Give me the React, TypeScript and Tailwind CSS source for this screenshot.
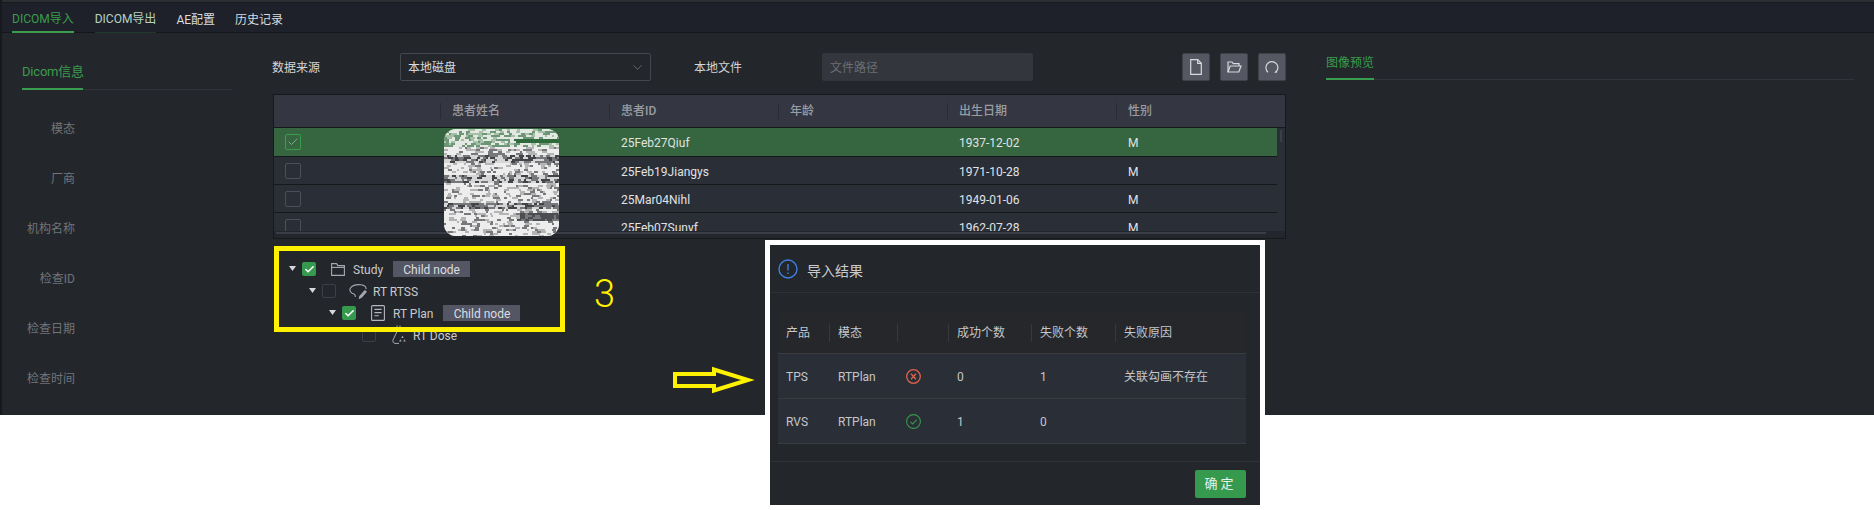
import { Check, ChevronDown } from "lucide-react";

const patients = [
  { id: "25Feb27Qiuf", birth: "1937-12-02", sex: "M", checked: true },
  { id: "25Feb19Jiangys", birth: "1971-10-28", sex: "M", checked: false },
  { id: "25Mar04Nihl", birth: "1949-01-06", sex: "M", checked: false },
  { id: "25Feb07Sunyf", birth: "1962-07-28", sex: "M", checked: false },
];

const sideLabels = ["模态", "厂商", "机构名称", "检查ID", "检查日期", "检查时间"];
const tableHeads = ["患者姓名", "患者ID", "年龄", "出生日期", "性别"];

// mosaic that covers the name column
function Mosaic() {
  let seed = 41;
  const rand = () => {
    seed = (seed * 16807) % 2147483647;
    return seed / 2147483647;
  };
  const cells: { x: number; y: number; w: number; fill: string }[] = [];
  for (let y = 0; y < 107; y += 2) {
    const darkBand = (y >= 26 && y < 34) || (y >= 46 && y < 54) || (y >= 74 && y < 80);
    for (let x = 0; x < 115; ) {
      const r = rand();
      const w = 2 + Math.floor(rand() * 4);
      let fill = r > 0.4 ? "#ededed" : r > 0.18 ? "#b4b4b5" : "#77787b";
      if (y < 18) fill = r > 0.5 ? "#e3e8e3" : r > 0.2 ? "#6d9676" : "#a6bfa9";
      if (darkBand) fill = r > 0.62 ? "#d6d6d6" : r > 0.3 ? "#77787b" : "#434448";
      if (y >= 84 && y < 92 && x > 72) fill = r > 0.3 ? "#4c4d51" : "#77787b";
      if (y >= 10 && y < 13 && x > 68) fill = "#2f6a3c";
      cells.push({ x, y, w, fill });
      x += w;
    }
  }
  return (
    <svg
      viewBox="0 0 115 107"
      className="absolute left-[444px] top-[129px] h-[107px] w-[115px] rounded-[12px]"
    >
      <rect width="115" height="107" fill="#cfcfcf" />
      {cells.map((c, i) => (
        <rect key={i} x={c.x} y={c.y} width={c.w} height="2" fill={c.fill} />
      ))}
    </svg>
  );
}

function CheckBox({ checked, tree }: { checked?: boolean; tree?: boolean }) {
  if (tree) {
    return checked ? (
      <span className="flex h-[14px] w-[14px] items-center justify-center rounded-[2px] bg-[#359a4e]">
        <Check size={11} strokeWidth={3.5} color="#fff" />
      </span>
    ) : (
      <span className="h-[14px] w-[14px] rounded-[2px] border border-[#3c3f45]" />
    );
  }
  return checked ? (
    <span className="flex h-[16px] w-[16px] items-center justify-center rounded-[2px] border border-[#3a9d4d]">
      <Check size={12} strokeWidth={1.5} color="#8fc79c" />
    </span>
  ) : (
    <span className="h-[16px] w-[16px] rounded-[2px] border border-[#4a4f5a]" />
  );
}

function FileIcon() {
  return (
    <svg width="12" height="16" viewBox="0 0 12 16" fill="none" stroke="#d8dade" strokeWidth="1.2">
      <path d="M.7.7h7l3.6 3.6v11H.7z" />
      <path d="M7.7.7v3.6h3.6" />
    </svg>
  );
}

function OpenFolderIcon() {
  return (
    <svg width="15" height="12" viewBox="0 0 15 12" fill="none" stroke="#d8dade" strokeWidth="1.2">
      <path d="M1 11V1h4l1.2 1.6H12V5" />
      <path d="M1 11l2.2-6H14l-2.2 6z" />
    </svg>
  );
}

function RefreshIcon() {
  return (
    <svg width="14" height="14" viewBox="0 0 14 14" fill="none" stroke="#d8dade" strokeWidth="1.2">
      <path d="M3 12.2A6 6 0 1 1 11 12" />
      <path d="M11.9 9.8V12.8H9.2" fill="#d8dade" stroke="none" />
    </svg>
  );
}

function FolderIcon() {
  return (
    <svg width="14" height="13" viewBox="0 0 14 13" fill="none" stroke="#a6a9b0" strokeWidth="1.1">
      <path d="M.6.6h5l1.2 2h6.6v9.8H.6z" />
      <path d="M.6 4.4h12.8" />
    </svg>
  );
}

function RtssIcon() {
  return (
    <svg width="18" height="15" viewBox="0 0 18 15" fill="none" stroke="#a6a9b0" strokeWidth="1.1">
      <path d="M5 10C1.5 9.2.4 6.6 1.2 4.4 2.6 1 8 .2 12 .8c3 .5 5.4 2 5 4.4" />
      <path d="M5 10c1.2.6 1.6 1.6 1.3 3" />
      <path d="M15.8 6.8l1.4 1.1-4.8 5.5-2 .9.5-2.1z" fill="#a6a9b0" />
    </svg>
  );
}

function PlanIcon() {
  return (
    <svg width="14" height="16" viewBox="0 0 14 16" fill="none" stroke="#b4b7bd" strokeWidth="1.1">
      <rect x=".6" y=".6" width="12.8" height="14.8" rx="1" />
      <path d="M3.4 4.4h7.2M3.4 7.6h7.2M3.4 10.8h4.4" />
    </svg>
  );
}

function DoseIcon() {
  return (
    <svg width="15" height="20" viewBox="0 0 15 20" fill="none" stroke="#a6a9b0" strokeWidth="1">
      <path d="M5 .5v6L1 15c-.6 1.6.2 3 2 3.4h4" />
      <path d="M8 .5v5" />
      <path d="M10.5 10.5l1.2 2.4h-2.4zM7 16.5l1.4-2.2 1.2 2.2zM13.8 16.5l-1.4-2.2-1.2 2.2z" fill="#a6a9b0" stroke="none" />
    </svg>
  );
}

const treeNodes = [
  { label: "Study", checked: true, badge: true, rowCls: "pl-[17px]", iconCls: "ml-[15px] mr-[8px]", icon: <FolderIcon /> },
  { label: "RT RTSS", checked: false, badge: false, rowCls: "pl-[37px]", iconCls: "ml-[13px] mr-[6px]", icon: <RtssIcon /> },
  { label: "RT Plan", checked: true, badge: true, rowCls: "pl-[57px]", iconCls: "ml-[15px] mr-[8px]", icon: <PlanIcon /> },
  { label: "RT Dose", checked: false, badge: false, rowCls: "pl-[90px]", iconCls: "ml-[16px] mr-[6px]", icon: <DoseIcon />, leaf: true },
];

const resultRows = [
  { product: "TPS", modality: "RTPlan", ok: false, success: "0", fail: "1", reason: "关联勾画不存在" },
  { product: "RVS", modality: "RTPlan", ok: true, success: "1", fail: "0", reason: "" },
];

const resultHeads = ["产品", "模态", "", "成功个数", "失败个数", "失败原因"];

function ResultModal() {
  return (
    <div className="absolute left-[765px] top-[240px] flex h-[270px] w-[500px] flex-col border-[5px] border-white bg-[#23262b] text-[12px] text-[#c4c6c9]">
      <div className="flex h-[48px] items-center border-b border-[#2e3136] pl-[8px]">
        <svg width="20" height="20" viewBox="0 0 20 20" fill="none" stroke="#3f7fe0" strokeWidth="1.4">
          <circle cx="10" cy="10" r="9" />
          <path d="M10 5v6.5M10 13.6v1.4" />
        </svg>
        <span className="ml-[9px] mt-[6px] text-[14px] text-[#c9cbce]">导入结果</span>
      </div>
      <div className="pl-[8px] pr-[14px] pt-[18px]">
        <div className="grid h-[43px] grid-cols-[51px_68px_51px_83px_84px_1fr] items-center border-b border-[#383b40] bg-[#25272a] pt-[1px]">
          {resultHeads.map((h, i) => (
            <div key={i} className={i === 0 ? "pl-[8px]" : "flex h-[18px] items-center border-l border-[#35383d] pl-[8px]"}>
              {h}
            </div>
          ))}
        </div>
        {resultRows.map((r) => (
          <div key={r.product} className="grid h-[45px] grid-cols-[51px_68px_51px_83px_84px_1fr] items-center border-b border-[#383b40] bg-[#2a2e37] pt-[1px]">
            <div className="pl-[8px]">{r.product}</div>
            <div className="pl-[9px]">{r.modality}</div>
            <div className="pl-[9px]">
              {r.ok ? (
                <svg width="15" height="15" viewBox="0 0 15 15" fill="none" stroke="#359a4e" strokeWidth="1.1">
                  <circle cx="7.5" cy="7.5" r="6.9" />
                  <path d="M4.5 7.8l2.2 2.2 4-4.4" />
                </svg>
              ) : (
                <svg width="15" height="15" viewBox="0 0 15 15" fill="none" stroke="#e0644c" strokeWidth="1.3">
                  <circle cx="7.5" cy="7.5" r="6.8" />
                  <path d="M5 4.8l5 5.4M10 4.8l-5 5.4" />
                </svg>
              )}
            </div>
            <div className="pl-[9px]">{r.success}</div>
            <div className="pl-[9px]">{r.fail}</div>
            <div className="pl-[9px]">{r.reason}</div>
          </div>
        ))}
      </div>
      <div className="mt-[17px] flex justify-end border-t border-[#2e3136] pr-[14px] pt-[8px]">
        <button className="h-[28px] w-[51px] rounded-[2px] bg-[#359a4e] text-[13px] tracking-[3px] text-[#e8f2ea]">确定</button>
      </div>
    </div>
  );
}

export default function App() {
  return (
    <div className="relative h-[510px] w-[1874px] overflow-hidden bg-white font-['Roboto','Noto_Sans_CJK_SC',sans-serif] text-[12px]">
      <div className="flex h-[415px] flex-col border-l-2 border-[#17191d] bg-[#23262b]">
        <div className="h-[3px] border-b border-[#191b1f] bg-[#2b2e33]" />

        {/* Top tabs */}
        <div className="flex h-[30px] gap-[20px] border-b border-[#14161a] bg-[#1e2129] pl-[10px]">
          <div className="flex h-[30px] items-center border-b-2 border-[#3a9d4d] pt-[3px] text-[#3a9d4d]">DICOM导入</div>
          <div className="ml-px flex h-[30px] items-center border-b border-[#1f3a2a] pt-[3px] text-[#b4d3c4]">DICOM导出</div>
          <div className="flex h-[30px] items-center pt-[3px] text-[#dadcdf]">AE配置</div>
          <div className="flex h-[30px] items-center pt-[3px] text-[#dadcdf]">历史记录</div>
        </div>

        <div className="flex flex-1">
          {/* Left info */}
          <div className="w-[270px] shrink-0 pl-[20px]">
            <div className="mt-[29px] flex w-[210px] border-b border-[#30343a]">
              <div className="-mb-px w-[61px] whitespace-nowrap border-b-2 border-[#3a9d4d] pb-[6px] text-[13px] leading-[20px] tracking-[-0.2px] text-[#3a9d4d]">Dicom信息</div>
            </div>
            <div className="mt-[14px] w-[53px]">
              {sideLabels.map((l) => (
                <div key={l} className="flex h-[50px] items-center justify-end whitespace-nowrap text-[#70747a]">
                  {l}
                </div>
              ))}
            </div>
          </div>

          {/* Center */}
          <div className="w-[1014px] shrink-0">
            <div className="mt-[20px] flex items-center text-[#d3d5d8]">
              <span className="w-[128px] pt-[2px]">数据来源</span>
              <div className="flex h-[28px] w-[251px] items-center justify-between rounded-[2px] border border-[#44474d] pl-[7px] pr-[5px]">
                <span className="pt-[2px] text-[#d8dadc]">本地磁盘</span>
                <ChevronDown size={15} strokeWidth={1} color="#8a8d93" />
              </div>
              <span className="ml-[43px] w-[128px] pt-[2px]">本地文件</span>
              <div className="flex h-[28px] w-[211px] items-center rounded-[2px] bg-[#33363c] pl-[8px] pt-[2px] text-[#6b6e73]">文件路径</div>
              <div className="ml-auto flex gap-[10px]">
                <button className="flex h-[28px] w-[28px] items-center justify-center rounded-[2px] border border-[#3f4248] bg-[#555762]"><FileIcon /></button>
                <button className="flex h-[28px] w-[28px] items-center justify-center rounded-[2px] border border-[#3f4248] bg-[#555762]"><OpenFolderIcon /></button>
                <button className="flex h-[28px] w-[28px] items-center justify-center rounded-[2px] border border-[#3f4248] bg-[#555762]"><RefreshIcon /></button>
              </div>
            </div>

            {/* Patient table */}
            <div className="ml-px mt-[13px] h-[145px] border border-[#16181c] bg-[#23262d]">
              <div className="grid h-[33px] grid-cols-[166px_repeat(5,169px)_1fr] items-center border-b border-[#16181c] bg-[#343741] font-medium text-[#9a9da3]">
                <div />
                {tableHeads.map((h) => (
                  <div key={h} className="flex h-[16px] items-center border-l border-[#282b33] pl-[11px]">{h}</div>
                ))}
                <div />
              </div>
              <div className="flex h-[103px] overflow-hidden">
                <div className="w-[1003px]">
                  {patients.map((p) => (
                    <div
                      key={p.id}
                      className={`grid grid-cols-[166px_169px_169px_169px_169px_1fr] items-center border-b border-[#16181c] text-[#e0e2e4] ${
                        p.checked ? "h-[29px] bg-[#35663f]" : "h-[28px] bg-[#2a2e37]"
                      }`}
                    >
                      <div className="flex pl-[11px]"><CheckBox checked={p.checked} /></div>
                      <div />
                      <div className="pl-[12px] pt-[2px]">{p.id}</div>
                      <div />
                      <div className="pl-[12px] pt-[2px]">{p.birth}</div>
                      <div className="pl-[12px] pt-[2px]">{p.sex}</div>
                    </div>
                  ))}
                </div>
                <div className="flex-1 bg-[#2a2e37] pl-[3px] pt-[2px]">
                  <div className="h-[12px] w-[2px] bg-[#3b3f49]" />
                </div>
              </div>
              <div className="mx-[2px] mt-px h-[2px] w-[990px] bg-[#3a3d46]" />
            </div>

            {/* Tree */}
            <div className="mt-[19px] text-[#c8cacd]">
              {treeNodes.map((n) => (
                <div key={n.label} className={`flex h-[22px] items-center ${n.rowCls}`}>
                  {!n.leaf && (
                    <svg width="13" height="6" viewBox="0 0 13 6" className="shrink-0">
                      <path d="M0 0h7L3.5 5z" fill="#d5d7da" />
                    </svg>
                  )}
                  <CheckBox tree checked={n.checked} />
                  <span className={`flex items-center ${n.iconCls}`}>{n.icon}</span>
                  <span className="pt-[1px]">{n.label}</span>
                  {n.badge && (
                    <span className="ml-[10px] flex h-[16px] w-[77px] items-center justify-center bg-[#545664] pt-[1px] text-[#dcdde0]">Child node</span>
                  )}
                </div>
              ))}
            </div>
          </div>

          {/* Right preview */}
          <div className="ml-[40px] mt-[20px] h-fit w-[528px] border-b border-[#30343a]">
            <div className="-mb-px w-fit border-b-2 border-[#3a9d4d] pb-[5px] leading-[20px] text-[#3a9d4d]">图像预览</div>
          </div>
        </div>
      </div>

      <Mosaic />

      {/* Annotations on top of the screenshot */}
      <div className="absolute left-[274px] top-[246px] h-[86px] w-[291px] border-[5px] border-[#fff200]" />
      <div className="absolute left-[594px] top-[272px] text-[38px] font-light leading-[44px] text-[#fff200]">3</div>
      <svg width="85" height="30" viewBox="671 365 85 30" className="absolute left-[671px] top-[365px]" fill="none" stroke="#fff200" strokeWidth="4">
        <path d="M675 374H714V369.5L748 380L714 390.5V386H675Z" />
      </svg>

      <ResultModal />
    </div>
  );
}
